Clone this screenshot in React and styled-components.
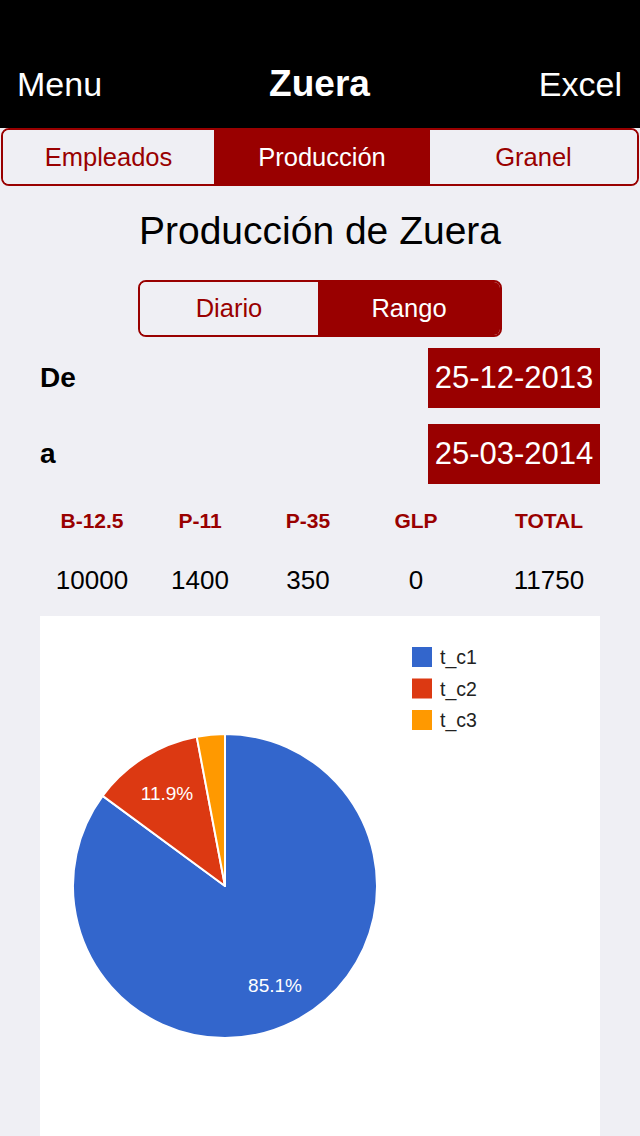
import React, { useState } from "react";
import styled, { createGlobalStyle } from "styled-components";

const RED = "#990000";
const PAGE = "#efeff4";

const Global = createGlobalStyle`
  html, body {
    margin: 0;
    padding: 0;
    background: ${PAGE};
    font-family: "Liberation Sans", Arial, Helvetica, sans-serif;
  }
`;

const Screen = styled.div`
  width: 640px;
  min-height: 1136px;
  background: ${PAGE};
  overflow: hidden;
`;

// Barra superior
const NavBar = styled.header`
  background: #000;
  height: 128px;
  box-sizing: border-box;
  padding: 40px 18px 0 17px;
  display: flex;
  align-items: center;
  justify-content: space-between;
  color: #fff;
`;

const NavButton = styled.span`
  font-size: 34px;
  width: 110px;
  text-align: ${(p) => (p.$right ? "right" : "left")};
`;

const NavTitle = styled.h1`
  margin: 0;
  font-size: 37px;
  font-weight: bold;
`;

const Segmented = styled.div`
  display: grid;
  grid-template-columns: ${(p) => p.$cols};
  height: ${(p) => p.$height}px;
  width: ${(p) => p.$width};
  margin: ${(p) => p.$margin};
  box-sizing: border-box;
  border: 2px solid ${RED};
  border-radius: 8px;
  overflow: hidden;
`;

const Segment = styled.button`
  border: none;
  margin: 0;
  padding: 0;
  font-family: inherit;
  font-size: 25.5px;
  color: ${(p) => (p.$active ? "#fff" : RED)};
  background: ${(p) => (p.$active ? RED : PAGE)};
  display: flex;
  align-items: center;
  justify-content: center;
  cursor: pointer;
`;

const Title = styled.h2`
  margin: 22px 0 0;
  text-align: center;
  font-weight: normal;
  font-size: 39px;
  color: #000;
  line-height: 46px;
`;

const DateRow = styled.div`
  display: flex;
  align-items: center;
  justify-content: space-between;
  padding: 0 40px;
  margin-top: ${(p) => p.$top}px;
`;

const DateLabel = styled.span`
  font-size: 28px;
  font-weight: bold;
  color: #000;
`;

const DateBox = styled.div`
  width: 172px;
  height: 60px;
  background: ${RED};
  color: #fff;
  font-size: 31px;
  display: flex;
  align-items: center;
  justify-content: center;
`;

const Table = styled.div`
  display: grid;
  grid-template-columns: 108px 108px 108px 108px 1fr;
  padding: 0 12px 0 38px;
  margin-top: 22px;
`;

const Head = styled.div`
  text-align: center;
  font-size: 21px;
  font-weight: bold;
  color: ${RED};
  height: 30px;
  line-height: 30px;
`;

const Cell = styled.div`
  text-align: center;
  font-size: 26px;
  color: #000;
  margin-top: 29px;
  line-height: 30px;
`;

const ChartCard = styled.div`
  background: #fff;
  margin: 21px 40px 0;
  height: 540px;
`;

const data = [
  { name: "t_c1", value: 10000, color: "#3366cc" },
  { name: "t_c2", value: 1400, color: "#dc3912" },
  { name: "t_c3", value: 350, color: "#ff9900" },
];

const CX = 185;
const CY = 270;
const R = 152;

function point(frac) {
  const a = frac * Math.PI * 2;
  return [CX + R * Math.sin(a), CY - R * Math.cos(a)];
}

function slicePath(from, to) {
  const [x1, y1] = point(from);
  const [x2, y2] = point(to);
  const large = to - from > 0.5 ? 1 : 0;
  return `M${CX},${CY} L${x1},${y1} A${R},${R} 0 ${large} 1 ${x2},${y2} Z`;
}

const PieChart = () => {
  const total = data.reduce((s, d) => s + d.value, 0);
  let acc = 0;
  const slices = data.map((d) => {
    const from = acc / total;
    acc += d.value;
    return { ...d, from, to: acc / total };
  });
  return (
    <svg width="560" height="540" viewBox="0 0 560 540">
      {slices.map((s) => (
        <path
          key={s.name}
          d={slicePath(s.from, s.to)}
          fill={s.color}
          stroke="#fff"
          strokeWidth="2"
          strokeLinejoin="round"
        />
      ))}
      <text x="127" y="184" fill="#fff" fontSize="19" textAnchor="middle" fontFamily="Liberation Sans, Arial, sans-serif">
        11.9%
      </text>
      <text x="235" y="376" fill="#fff" fontSize="19" textAnchor="middle" fontFamily="Liberation Sans, Arial, sans-serif">
        85.1%
      </text>
      {data.map((d, i) => (
        <g key={d.name}>
          <rect x="372" y={31 + i * 31.5} width="20" height="20" fill={d.color} />
          <text
            x="400"
            y={48 + i * 31.5}
            fontSize="19.5"
            fill="#222"
            fontFamily="Liberation Sans, Arial, sans-serif"
          >
            {d.name}
          </text>
        </g>
      ))}
    </svg>
  );
};

const App = () => {
  const [tab, setTab] = useState("Producción");
  const [mode, setMode] = useState("Rango");
  const tabs = ["Empleados", "Producción", "Granel"];
  const heads = ["B-12.5", "P-11", "P-35", "GLP", "TOTAL"];
  const values = ["10000", "1400", "350", "0", "11750"];

  return (
    <Screen>
      <Global />
      <NavBar>
        <NavButton>Menu</NavButton>
        <NavTitle>Zuera</NavTitle>
        <NavButton $right>Excel</NavButton>
      </NavBar>

      <Segmented $cols="211px 216px 1fr" $height={58} $width="auto" $margin="0 1px">
        {tabs.map((t) => (
          <Segment key={t} $active={tab === t} onClick={() => setTab(t)}>
            {t}
          </Segment>
        ))}
      </Segmented>

      <Title>Producción de Zuera</Title>

      <Segmented $cols="178px 1fr" $height={57} $width="364px" $margin="26px auto 0">
        {["Diario", "Rango"].map((m) => (
          <Segment key={m} $active={mode === m} onClick={() => setMode(m)}>
            {m}
          </Segment>
        ))}
      </Segmented>

      <DateRow $top={11}>
        <DateLabel>De</DateLabel>
        <DateBox>25-12-2013</DateBox>
      </DateRow>
      <DateRow $top={16}>
        <DateLabel>a</DateLabel>
        <DateBox>25-03-2014</DateBox>
      </DateRow>

      <Table>
        {heads.map((h) => (
          <Head key={h}>{h}</Head>
        ))}
        {values.map((v, i) => (
          <Cell key={i}>{v}</Cell>
        ))}
      </Table>

      <ChartCard>
        <PieChart />
      </ChartCard>
    </Screen>
  );
};

export default App;
